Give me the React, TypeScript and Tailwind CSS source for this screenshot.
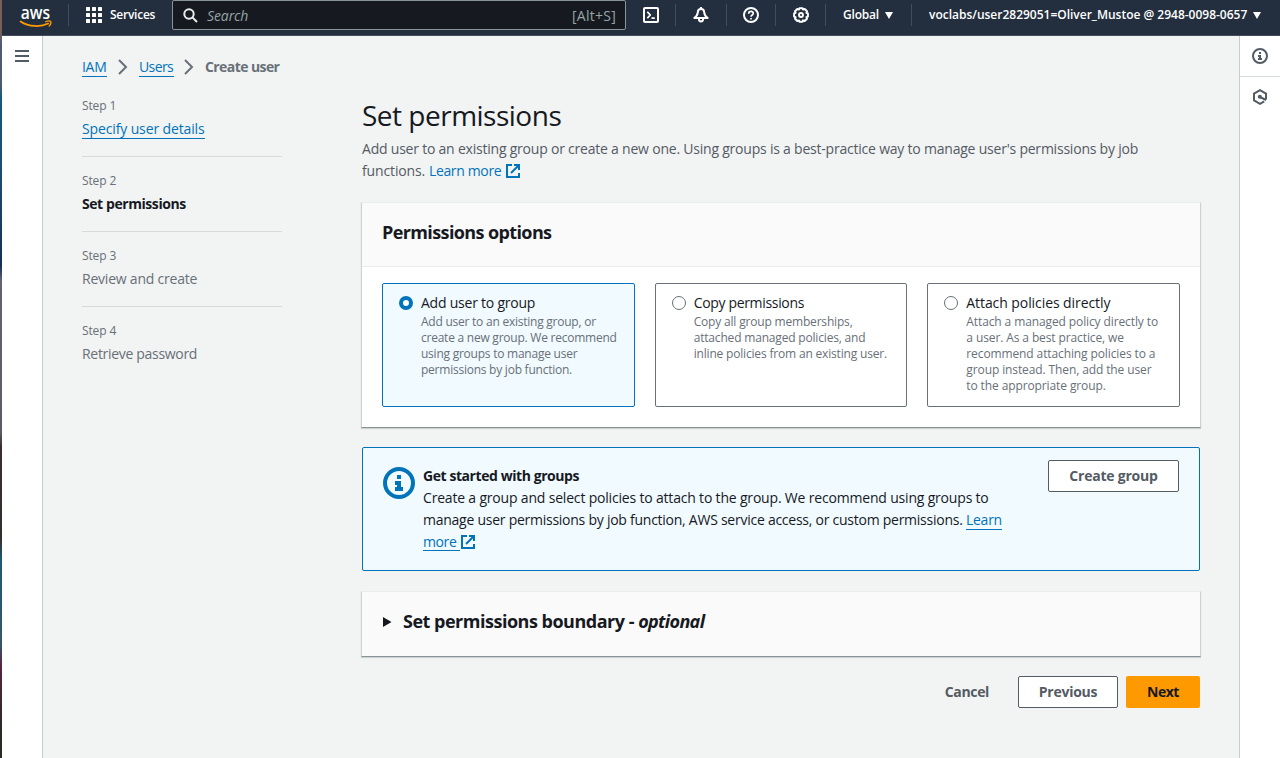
import type { ReactNode } from "react";

const ExternalIcon = ({ className = "" }: { className?: string }) => (
  <svg viewBox="0 0 16 16" className={`inline-block h-4 w-4 ${className}`} fill="none" stroke="currentColor" strokeWidth="2">
    <path d="M7 2H2v12h12V10" />
    <path d="M9 2h5v5" />
    <path d="M6 10l7.5-7.5" />
  </svg>
);

const InfoIcon = ({ className = "" }: { className?: string }) => (
  <svg viewBox="0 0 16 16" className={className} fill="none" stroke="currentColor" strokeWidth="2">
    <circle cx="8" cy="8" r="7" />
    <path d="M8 11V8H6" />
    <path d="M10 11H6" />
    <path d="M8 6V4" />
  </svg>
);

const AwsLogo = () => (
  <svg viewBox="0 0 32 22" className="h-[22px] w-8 overflow-visible" fill="none">
    <text x="0.8" y="11.6" textLength="29.4" lengthAdjust="spacingAndGlyphs" fill="#fff" fontFamily="Open Sans, sans-serif" fontWeight="600" fontSize="17.2">aws</text>
    <path d="M0.6 14.4C9 20 20.500 20.300 28.200 16.500" stroke="#f90" strokeWidth="1.8" strokeLinecap="round" />
    <path d="M25.800 14.700c2-.9 4.200-.9 4.900-.3.400.9-.1 3.200-1.600 4.700" stroke="#f90" strokeWidth="1.3" strokeLinecap="round" />
  </svg>
);

const Divider = () => <div className="h-[22px] w-px shrink-0 bg-[#414d5c]" />;

const Caret = () => (
  <svg viewBox="0 0 8 7" className="h-[7px] w-2" fill="#fff"><path d="M0 0h8L4 7z" /></svg>
);

const NavIcon = ({ children }: { children: ReactNode }) => (
  <svg viewBox="0 0 16 16" className="h-4 w-4 text-white" fill="none" stroke="currentColor" strokeWidth="2" strokeLinejoin="round">
    {children}
  </svg>
);

function TopBar() {
  return (
    <header className="flex h-9 shrink-0 items-start border-b border-[#414d5c] bg-[#232f3e] text-white">
      <div className="flex h-[30px] items-center">
        <div className="mt-[5px] ml-[18px] w-8"><AwsLogo /></div>
        <div className="ml-4"><Divider /></div>
        <svg viewBox="0 0 16 16" className="ml-[17px] h-4 w-4" fill="#fff">
          {[0, 6, 12].flatMap((y) => [0, 6, 12].map((x) => <rect key={`${x}-${y}`} x={x} y={y} width="4" height="4" rx="0.6" />))}
        </svg>
        <span className="ml-2 w-[62px] text-[12px] font-semibold tracking-[-0.25px]">Services</span>
        <div className="flex h-[30px] w-[454px] items-center rounded-[2px] border border-[#879596] bg-[#16191f] pr-[9px] pl-[11px]">
          <svg viewBox="0 0 15 15" className="-ml-px h-[15px] w-[15px]" fill="none" stroke="#eaeded" strokeWidth="2">
            <circle cx="6" cy="6" r="4.7" />
            <path d="M9.4 9.4l4.6 4.6" />
          </svg>
          <span className="ml-[9px] text-[14px] tracking-[-0.1px] text-[#95a5a6] italic">Search</span>
          <span className="ml-auto text-[14px] tracking-[0.25px] text-[#95a5a6]">[Alt+S]</span>
        </div>
        <div className="ml-[17px]">
          <NavIcon>
            <rect x="1" y="1" width="14" height="14" rx="1" />
            <path d="M4.3 4.8L7.3 8l-3 3.2M8.5 11.2h3.3" strokeWidth="1.7" />
          </NavIcon>
        </div>
        <div className="ml-4"><Divider /></div>
        <div className="ml-[17px]">
          <NavIcon>
            <path d="M8 2C5.800 2 4.900 3.500 4.800 5.200 4.600 8 3.300 9.600 1.300 11h13.400c-2-1.400-3.300-3-3.500-5.800C11.100 3.500 10.200 2 8 2z" />
            <path d="M8 0v2M5.800 11.500c0 3.900 4.400 3.900 4.400 0" strokeWidth="1.900" />
          </NavIcon>
        </div>
        <div className="ml-[17px]"><Divider /></div>
        <div className="ml-4">
          <NavIcon>
            <circle cx="8" cy="8" r="7" />
            <path d="M5.700 6.700c0-3 4.800-2.900 4.600-.2-.1 1.500-2.300 1.500-2.300 3.200M8 10.900v1.700" strokeWidth="1.700" />
          </NavIcon>
        </div>
        <div className="ml-4"><Divider /></div>
        <div className="ml-[17px]">
          <NavIcon>
            <path d="M6.400 1.200h3.200l.4 1.300 1.700-.5 2.300 2.300-.6 1.500 1.500.6v3.200l-1.500.6.6 1.500-2.300 2.300-1.700-.6-.4 1.400H6.400L6 13.400l-1.700.6L2 11.700l.6-1.500-1.500-.6V6.400l1.500-.6L2 4.300 4.300 2l1.700.5z" />
            <circle cx="8" cy="8" r="2" strokeWidth="1.900" />
          </NavIcon>
        </div>
        <div className="ml-4"><Divider /></div>
        <span className="ml-[17px] w-[42px] text-[12px] font-semibold tracking-[-0.19px]">Global</span>
        <Caret />
        <div className="ml-[18px]"><Divider /></div>
        <span className="ml-[17px] w-[324px] text-[12px] font-semibold tracking-[-0.01px] whitespace-nowrap">voclabs/user2829051=Oliver_Mustoe @ 2948-0098-0657</span>
        <Caret />
      </div>
    </header>
  );
}

const Chevron = () => (
  <svg viewBox="0 0 10 16" className="h-4 w-[10px]" fill="none" stroke="#687078" strokeWidth="2"><path d="M1 1l7 7-7 7" /></svg>
);

const steps = [
  { label: "Specify user details", cls: "text-[#0073bb] border-b border-[#0073bb] leading-[19px] mt-[1px] tracking-[-0.13px]" },
  { label: "Set permissions", cls: "font-bold text-[#16191f] tracking-[-0.43px]" },
  { label: "Review and create", cls: "text-[#687078] tracking-[-0.22px]" },
  { label: "Retrieve password", cls: "text-[#687078] tracking-[-0.31px]" },
];

function Steps() {
  return (
    <ol className="mt-5 w-[200px] shrink-0">
      {steps.map((s, i) => (
        <li key={s.label} className={i < 3 ? "mb-4 h-[59px] border-b border-[#d5dbdb]" : ""}>
          <div className="text-[12px] leading-4 tracking-[-0.12px] text-[#687078]">Step {i + 1}</div>
          <div className="mt-1 flex h-[22px] items-start text-[14px] leading-[22px]"><span className={s.cls}>{s.label}</span></div>
        </li>
      ))}
    </ol>
  );
}

const tiles = [
  { title: "Add user to group", cls: "tracking-[-0.23px]", descCls: "tracking-[-0.24px]", lines: ["Add user to an existing group, or", "create a new group. We recommend", "using groups to manage user", "permissions by job function."] },
  { title: "Copy permissions", cls: "tracking-[-0.33px]", descCls: "tracking-[-0.18px]", lines: ["Copy all group memberships,", "attached managed policies, and", "inline policies from an existing user."] },
  { title: "Attach policies directly", cls: "tracking-[-0.08px]", descCls: "tracking-[-0.11px]", lines: ["Attach a managed policy directly to", "a user. As a best practice, we", "recommend attaching policies to a", "group instead. Then, add the user", "to the appropriate group."] },
];

const cardCls = "border border-t-[#eaeded] border-r-[#ccd1d1] border-b-[#879596] border-l-[#ccd1d1] shadow-[0_1px_1px_0_rgba(0,28,36,0.15)]";

function Options() {
  return (
    <section className={`-mx-px mt-5 h-[226px] bg-white ${cardCls}`}>
      <div className="h-16 border-b border-[#eaeded] bg-[#fafafa] px-5 pt-[18px]">
        <h2 className="text-[18px] leading-[22px] font-bold tracking-[-0.61px]">Permissions options</h2>
      </div>
      <div className="grid grid-cols-3 gap-5 px-5 pt-4">
        {tiles.map((t, i) => (
          <div key={t.title} className={`flex h-[124px] rounded-[2px] border pt-2 pl-4 ${i === 0 ? "border-[#0073bb] bg-[#f1faff]" : "border-[#687078]"}`}>
            <span className={`mt-1 h-[14px] w-[14px] shrink-0 rounded-full bg-white ${i === 0 ? "border-4 border-[#0073bb]" : "border border-[#687078]"}`} />
            <div className="ml-2">
              <div className={`text-[14px] leading-[22px] ${t.cls}`}>{t.title}</div>
              <p className={`text-[12px] leading-4 whitespace-nowrap text-[#687078] ${t.descCls}`}>
                {t.lines.map((l) => <span key={l} className="block">{l}</span>)}
              </p>
            </div>
          </div>
        ))}
      </div>
    </section>
  );
}

function GroupsAlert() {
  return (
    <section className="mt-[19px] flex h-[124px] rounded-[2px] border border-[#0073bb] bg-[#f1faff] pl-5">
      <InfoIcon className="mt-[19px] h-8 w-8 shrink-0 text-[#0073bb]" />
      <div className="mt-[17px] ml-2 w-[600px] text-[14px] leading-[22px] whitespace-nowrap">
        <div className="font-bold tracking-[-0.43px]">Get started with groups</div>
        <div className="tracking-[-0.185px]">Create a group and select policies to attach to the group. We recommend using groups to</div>
        <div>
          <span className="tracking-[-0.254px]">manage user permissions by job function, AWS service access, or custom permissions. </span>
          <a className="border-b border-[#0073bb] tracking-[-0.25px] text-[#0073bb]">Learn</a>
        </div>
        <div className="flex text-[#0073bb]">
          <a className="h-[20px] w-[37px] border-b border-[#0073bb] tracking-[-0.4px]">more</a>
          <ExternalIcon className="mt-[3px]" />
        </div>
      </div>
      <button className="mt-3 mr-5 ml-auto h-8 w-[131px] rounded-[2px] border border-[#545b64] bg-white pb-[2px] text-[14px] font-bold tracking-[-0.22px] text-[#545b64]">Create group</button>
    </section>
  );
}

export default function App() {
  return (
    <div className="flex h-[758px] w-[1280px] overflow-hidden bg-[#f2f3f3] font-['Open_Sans',sans-serif] text-[#16191f]">
      <div className="w-0.5 shrink-0 bg-[linear-gradient(#7a5f58_0,#7a5f58_4%,#4e5a72_6%,#4e5a72_11%,#155a78_13%,#1d4a6c_24%,#152f55_35%,#62636f_37%,#5b5c66_57%,#3a2d2e_59%,#33302c_71%,#1d5a76_74%,#37566a_85%,#5a2340_88%,#2c2a24_96%)]" />
      <div className="flex min-w-0 flex-1 flex-col">
        <TopBar />
        <div className="flex min-h-0 flex-1">
          <aside className="w-[41px] shrink-0 border-r border-[#c8cbcb] bg-white pt-[14px] pl-[13px]">
            <svg viewBox="0 0 14 12" className="h-3 w-[14px]" fill="#545b64"><path d="M0 0h14v2H0zM0 5h14v2H0zM0 10h14v2H0z" /></svg>
          </aside>
          <main className="min-w-0 flex-1 pt-5 pr-[39px] pl-[39px]">
            <nav className="flex h-[22px] items-center text-[14px]">
              <a className="w-[25px] border-b border-[#0073bb] leading-[19px] tracking-[-0.3px] text-[#0073bb]">IAM</a>
              <span className="ml-[11px]"><Chevron /></span>
              <a className="ml-[11px] w-[35px] border-b border-[#0073bb] leading-[19px] tracking-[-0.6px] text-[#0073bb]">Users</a>
              <span className="ml-[10px]"><Chevron /></span>
              <span className="ml-[11px] pb-[2px] font-bold tracking-[-0.58px] text-[#687078]">Create user</span>
            </nav>
            <div className="flex">
              <Steps />
              <div className="ml-20 w-[838px]">
                <h1 className="mt-[19px] text-[28px] leading-9 tracking-[-0.5px]">Set permissions</h1>
                <div className="mt-[5px] text-[14px] leading-[22px] whitespace-nowrap text-[#545b64]">
                  <div className="tracking-[-0.216px]">Add user to an existing group or create a new one. Using groups is a best-practice way to manage user's permissions by job</div>
                  <div className="flex">
                    <span className="w-[67px] tracking-[-0.13px]">functions.</span>
                    <a className="w-[76px] tracking-[-0.36px] text-[#0073bb]">Learn more</a>
                    <ExternalIcon className="mt-[3px] text-[#0073bb]" />
                  </div>
                </div>
                <Options />
                <GroupsAlert />
                <section className={`-mx-px mt-5 flex h-[66px] items-start bg-[#fafafa] pt-[18px] pl-[21px] ${cardCls}`}>
                  <svg viewBox="0 0 9 10" className="mt-[7px] h-[10px] w-[9px]" fill="#16191f"><path d="M0 0v10L8.500 5z" /></svg>
                  <h2 className="ml-[11px] text-[18px] leading-[22px] font-bold tracking-[-0.49px]">
                    Set permissions boundary - <em className="tracking-[-0.66px]">optional</em>
                  </h2>
                </section>
                <div className="mt-[19px] flex items-center justify-end text-[14px] font-bold text-[#545b64]">
                  <button className="mr-[29px] pb-[2px] tracking-[-0.35px]">Cancel</button>
                  <button className="mr-2 h-8 w-[100px] rounded-[2px] border border-[#545b64] bg-white pb-[2px] tracking-[-0.25px]">Previous</button>
                  <button className="h-8 w-[74px] rounded-[2px] bg-[#ff9900] pb-[2px] tracking-[-0.5px] text-[#16191f]">Next</button>
                </div>
              </div>
            </div>
          </main>
          <aside className="w-[41px] shrink-0 border-l border-[#c8cbcb] bg-white">
            <div className="flex h-[41px] items-center justify-center border-b border-[#d5dbdb] text-[#545b64]"><InfoIcon className="h-4 w-4" /></div>
            <div className="flex h-10 items-center justify-center text-[#545b64]">
              <svg viewBox="0 0 16 16" className="h-4 w-4" fill="none" stroke="currentColor" strokeWidth="2">
                <path d="M14 10.500V4.600L8 1.200 2 4.600v6.800l6 3.400 4.200-2.400" />
                <path d="M8 8l6 3" />
                <circle cx="7.800" cy="7.800" r="2" fill="currentColor" stroke="none" />
              </svg>
            </div>
          </aside>
        </div>
      </div>
    </div>
  );
}
